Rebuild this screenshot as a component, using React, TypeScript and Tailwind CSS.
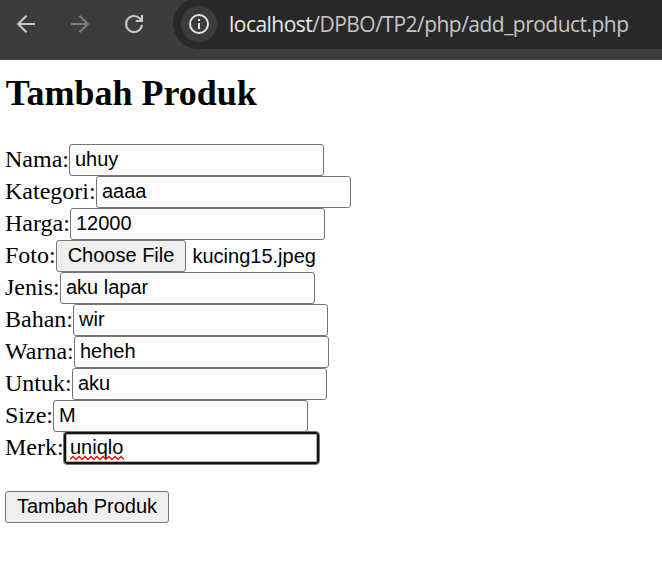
type Field = { label: string; value: string; width: string; file?: boolean; focused?: boolean };

const fields: Field[] = [
  { label: "Nama:", value: "uhuy", width: "w-[64px]" },
  { label: "Kategori:", value: "aaaa", width: "w-[91px]" },
  { label: "Harga:", value: "12000", width: "w-[65px]" },
  { label: "Foto:", value: "kucing15.jpeg", width: "w-[51px]", file: true },
  { label: "Jenis:", value: "aku lapar", width: "w-[55px]" },
  { label: "Bahan:", value: "wir", width: "w-[68px]" },
  { label: "Warna:", value: "heheh", width: "w-[69px]" },
  { label: "Untuk:", value: "aku", width: "w-[67px]" },
  { label: "Size:", value: "M", width: "w-[48px]" },
  { label: "Merk:", value: "uniqlo", width: "w-[59px]", focused: true },
];

const sans = "font-['Liberation_Sans',Arial,sans-serif] text-[20px] leading-[23px]";

function Toolbar() {
  return (
    <header className="flex h-[60px] items-start overflow-hidden border-b border-[#4a4a4a] bg-[#3c3c3c]">
      <div className="flex h-12 w-[173px] shrink-0 items-center pl-[14px]">
        <svg width="24" height="24" viewBox="0 0 24 24" fill="none" stroke="#c7c7c7" strokeWidth="2.2">
          <path d="M21 12H4.5M12.5 3.7 4.2 12l8.3 8.3" />
        </svg>
        <svg className="ml-[30px]" width="24" height="24" viewBox="0 0 24 24" fill="none" stroke="#7b7b7b" strokeWidth="2.2">
          <path d="M3 12h16.5M11.5 3.7l8.3 8.3-8.3 8.3" />
        </svg>
        <svg className="ml-[30px]" width="24" height="24" viewBox="0 0 24 24" fill="none" stroke="#c7c7c7" strokeWidth="2.1">
          <path d="M20 13A8 8 0 1 1 17.8 6.4L19.6 8.3" />
          <path d="M20 3v6h-6.3" />
        </svg>
      </div>
      <div className="-mt-[2px] flex h-[51px] flex-1 items-center rounded-l-full bg-[#282828] pl-2">
        <span className="flex size-9 shrink-0 items-center justify-center rounded-full bg-[#3c3c3c]">
          <svg width="20" height="20" viewBox="0 0 20 20" fill="none" stroke="#e3e3e3" strokeWidth="2">
            <circle cx="10" cy="10" r="9" />
            <path d="M10 9v6M10 5v2" />
          </svg>
        </span>
        <div className="ml-[12px] whitespace-nowrap font-['Open_Sans','Noto_Sans',sans-serif] text-[21px] leading-7 tracking-[-0.52px] text-[#c7c7c7]">
          <span className="text-[#e8e8e8]">localhost</span>/DPBO/TP2/php/add_product.php
        </div>
      </div>
    </header>
  );
}

function FieldControl({ field }: { field: Field }) {
  if (field.file) {
    return (
      <div className={`flex h-8 items-center ${sans}`}>
        <button className="h-8 w-[130px] shrink-0 whitespace-nowrap rounded-[3px] border border-[#767676] bg-[#efefef] pb-[2px] text-center">
          Choose File
        </button>
        <span className="ml-[6.5px]">{field.value}</span>
      </div>
    );
  }
  if (field.focused) {
    return (
      <div className={`relative h-8 w-[255px] rounded-[3px] border-2 border-[#101010] bg-white pl-1 pt-[2px] shadow-[inset_0_0_0_1px_#b5b5b5] outline outline-1 outline-[#777777] ${sans}`}>
        {field.value}
        <svg className="absolute left-1 top-[21px]" width="54" height="6" viewBox="0 0 54 6" fill="none" stroke="#f00" strokeWidth="1.3">
          <path d="M0 4.5l3-3 3 3 3-3 3 3 3-3 3 3 3-3 3 3 3-3 3 3 3-3 3 3 3-3 3 3 3-3 3 3 3-3 3 3" />
        </svg>
      </div>
    );
  }
  return (
    <input
      type="text"
      defaultValue={field.value}
      className={`h-8 w-[255px] rounded-[3px] border border-[#767676] bg-white px-[5px] pb-px ${sans}`}
    />
  );
}

export default function App() {
  return (
    <div className="h-[562px] w-[662px] overflow-hidden bg-white text-black">
      <Toolbar />
      <main className="pl-[5px] font-['Liberation_Serif','Times_New_Roman',serif]">
        <h1 className="pl-[0.7px] pt-[13px] text-[36px] font-bold leading-[41px]">Tambah Produk</h1>
        <form className="pt-[30px]">
          {fields.map((field) => (
            <div key={field.label} className="flex h-8">
              <label className={`${field.width} shrink-0 whitespace-nowrap text-[24px] leading-[30px]`}>{field.label}</label>
              <FieldControl field={field} />
            </div>
          ))}
          <button
            type="button"
            className={`mt-[27px] h-8 w-[164px] whitespace-nowrap rounded-[3px] border border-[#767676] bg-[#efefef] pb-[2px] text-center ${sans}`}
          >
            Tambah Produk
          </button>
        </form>
      </main>
    </div>
  );
}
